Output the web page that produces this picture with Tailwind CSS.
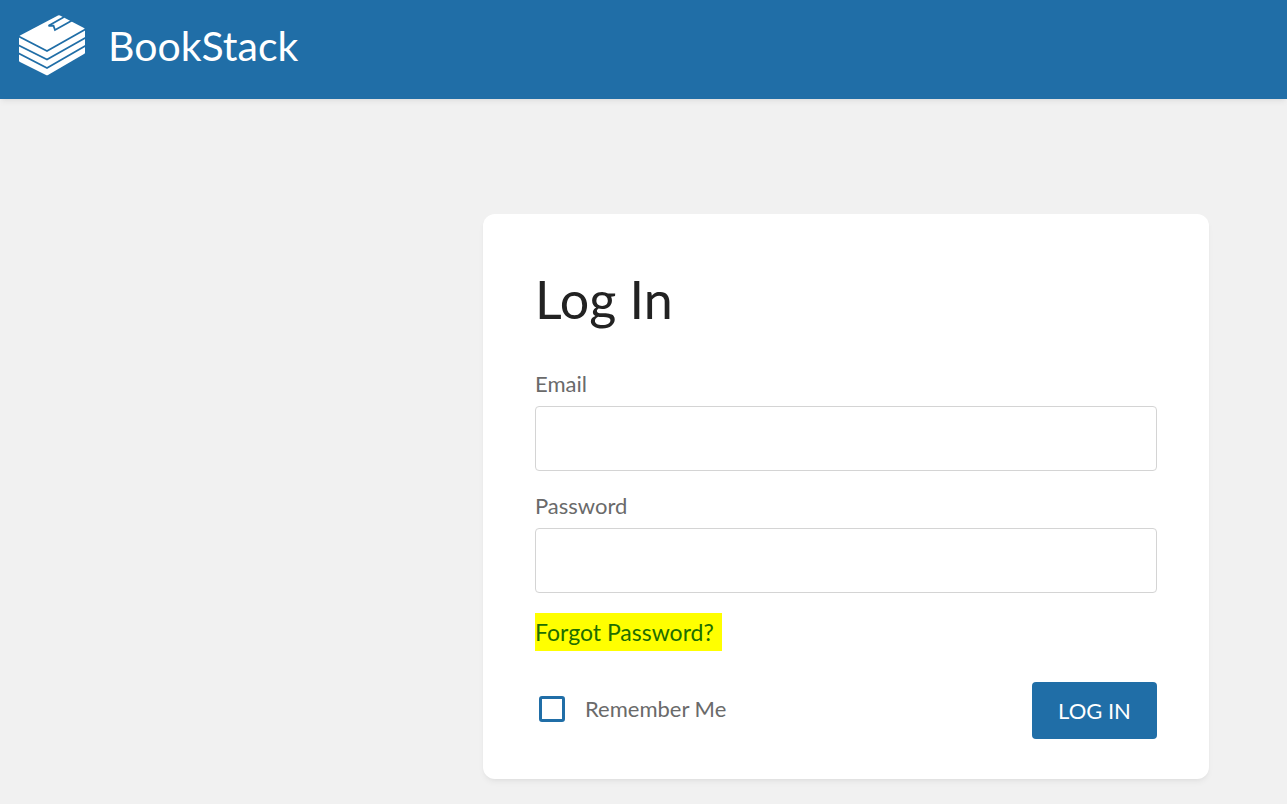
<!DOCTYPE html>
<html lang="en">
<head>
    <meta charset="UTF-8">
    <meta name="viewport" content="width=device-width, initial-scale=1.0">
    <title>Log In | BookStack</title>
    <script src="https://cdn.jsdelivr.net/npm/@tailwindcss/browser@4"></script>
</head>
<body class="bg-[#f1f1f1] font-['Lato','Noto_Sans',sans-serif] text-[22px] leading-8 text-[#6a6a6a]">
    <!-- Header -->
    <header class="bg-[#206ea7] shadow-md shadow-black/5">
        <div class="flex h-[99px] items-center px-[18px] pb-[9px]">
            <a href="/" class="flex items-center gap-[22px] text-[41px] leading-none text-white">
                <svg class="h-[62px] w-[68px]" viewBox="0 0 68 62" fill="none">
                    <path d="M40 1.5Q41 1 42 1.5L66 14Q67 14.5 67 15.5V38.5Q67 39.5 66 40L30 61Q29 61.5 28 61L2 48Q1 47.5 1 46.5V23Q1 22 2 21.5Z" fill="#fff"/>
                    <path d="M0 22L29 37L68 15M0 31L29 45.5L68 23.5M0 39L29 54L68 31.5" stroke="#206ea7" stroke-width="1.8"/>
                    <path d="M46 3L30.5 11.8L35.5 11.6L37 16L54 6.5" stroke="#206ea7" stroke-width="1.8"/>
                </svg>
                <span>BookStack</span>
            </a>
        </div>
    </header>

    <!-- Login form -->
    <main class="pt-[115px] pb-6">
        <div class="mr-[78px] ml-auto w-full max-w-[726px] rounded-xl bg-white px-[52px] pt-[55px] pb-10 shadow-md shadow-black/5">
            <h1 class="text-[52px] leading-[60px] text-[#222]">Log In</h1>
            <form action="/login" method="post" class="mt-[39px]">
                <div>
                    <label for="email" class="mb-[6px] block">Email</label>
                    <input type="email" id="email" name="email" class="block h-[65px] w-full rounded border border-[#d4d4d4] px-4">
                </div>
                <div class="mt-[19px]">
                    <label for="password" class="mb-[6px] block">Password</label>
                    <input type="password" id="password" name="password" class="block h-[65px] w-full rounded border border-[#d4d4d4] px-4">
                </div>
                <div class="mt-5 flex">
                    <a href="/password/email" class="bg-[#ff0] pr-2 text-[23px] leading-[38px] text-[#206e00]">Forgot Password?</a>
                </div>
                <div class="mt-[31px] flex items-center justify-between">
                    <label for="remember" class="flex items-center gap-5 pb-1 pl-1">
                        <input type="checkbox" id="remember" name="remember" class="size-[26px] appearance-none rounded-[3px] border-3 border-[#206ea7] checked:bg-[#206ea7]">
                        Remember Me
                    </label>
                    <button type="submit" class="h-[57px] w-[125px] rounded-sm bg-[#206ea7] text-white uppercase">Log In</button>
                </div>
            </form>
        </div>
    </main>
</body>
</html>
